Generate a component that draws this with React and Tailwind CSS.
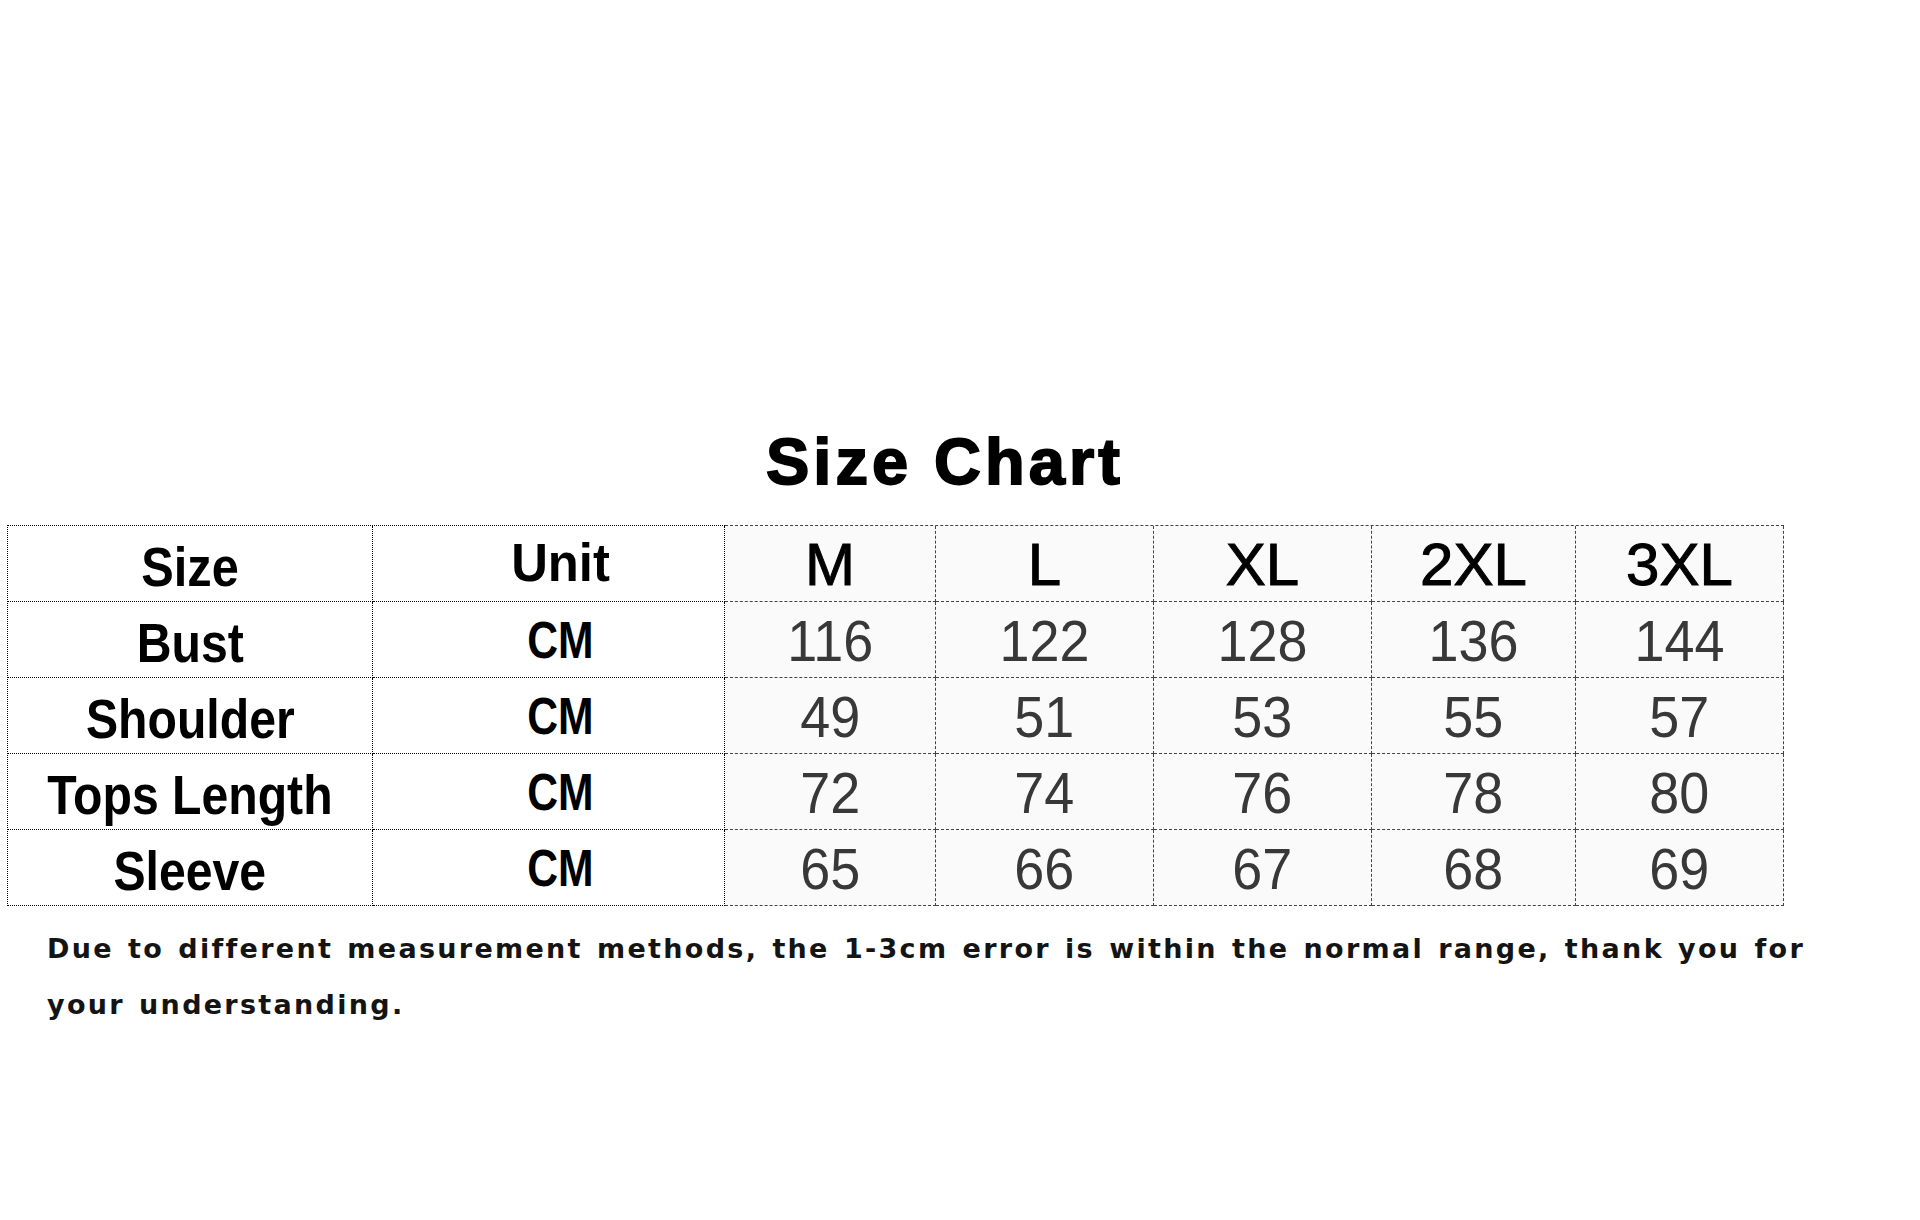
const sizes = ['M', 'L', 'XL', '2XL', '3XL'];

const rows = [
  { label: 'Bust', unit: 'CM', values: [116, 122, 128, 136, 144] },
  { label: 'Shoulder', unit: 'CM', values: [49, 51, 53, 55, 57] },
  { label: 'Tops Length', unit: 'CM', values: [72, 74, 76, 78, 80] },
  { label: 'Sleeve', unit: 'CM', values: [65, 66, 67, 68, 69] },
];

// no narrow face installed, so the condensed look comes from a horizontal squeeze
const sans = "font-['Liberation_Sans',Arial,sans-serif]";

function LeftCell({ children, className = '' }) {
  return (
    <div className={`h-[76px] flex items-center justify-center border-r border-b border-dotted border-black ${className}`}>
      {children}
    </div>
  );
}

function RightCell({ children, className = '' }) {
  return (
    <div className={`h-[76px] flex items-center justify-center border-r border-b border-dashed border-[#444444] ${className}`}>
      {children}
    </div>
  );
}

export default function App() {
  return (
    <div className="w-[1920px] h-[1220px] bg-white overflow-hidden">
      {/* Title */}
      <div className="pt-[422px] pl-[766px]">
        <h1 className={`${sans} font-bold text-[65px] leading-[80px] tracking-[4px] text-black [-webkit-text-stroke:1.8px_#000]`}>
          Size Chart
        </h1>
      </div>

      {/* Table */}
      <div className="mt-[23px] ml-[7px] flex">
        <div className="grid grid-cols-[365px_352px] border-l border-t border-dotted border-black">
          <LeftCell className="pt-[6px]">
            <span className={`${sans} inline-block scale-x-[0.87] font-bold text-[56px] text-black`}>Size</span>
          </LeftCell>
          <LeftCell className="pb-[2px] pl-[24px]">
            <span className={`${sans} inline-block scale-x-[0.94] font-bold text-[54px] text-black`}>Unit</span>
          </LeftCell>
          {rows.map((r) => (
            <div key={r.label} className="contents">
              <LeftCell className="pt-[6px]">
                <span className={`${sans} inline-block scale-x-[0.86] font-bold text-[56px] text-black`}>{r.label}</span>
              </LeftCell>
              <LeftCell className="pl-[24px]">
                <span className={`${sans} inline-block scale-x-[0.82] font-bold text-[52px] text-black`}>{r.unit}</span>
              </LeftCell>
            </div>
          ))}
        </div>

        <div className="grid grid-cols-[211px_218px_218px_204px_208px] border-t border-dashed border-[#444444] bg-[#fafafa]">
          {sizes.map((s) => (
            <RightCell key={s} className="pt-[2px]">
              <span className={`${sans} text-[60px] text-black [-webkit-text-stroke:1px_#000]`}>{s}</span>
            </RightCell>
          ))}
          {rows.map((r) =>
            r.values.map((v, i) => (
              <RightCell key={r.label + i} className="pt-[2px]">
                <span className={`${sans} inline-block scale-x-[0.93] text-[58px] text-[#383838]`}>{v}</span>
              </RightCell>
            ))
          )}
        </div>
      </div>

      {/* Note */}
      <div className="pl-[47px] pt-[15px]">
        <p className="w-[1800px] font-['DejaVu_Sans',sans-serif] font-bold text-[27px] leading-[56px] tracking-[2.3px] [word-spacing:2.5px] text-[#141414]">
          Due to different measurement methods, the 1-3cm error is within the normal range, thank you for your understanding.
        </p>
      </div>
    </div>
  );
}
